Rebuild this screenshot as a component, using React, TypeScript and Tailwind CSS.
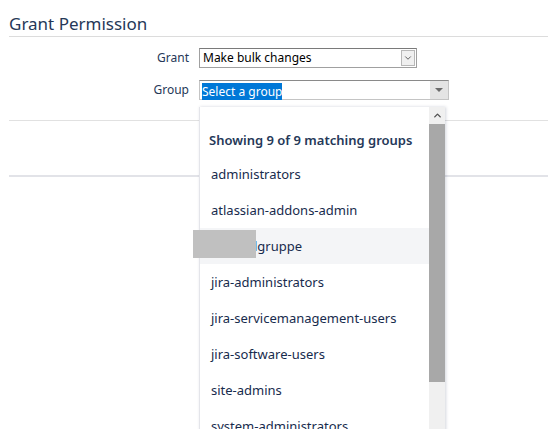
import { ChevronDown, ChevronUp } from "lucide-react";

const groups = [
  "administrators",
  "atlassian-addons-admin",
  "lgruppe",
  "jira-administrators",
  "jira-servicemanagement-users",
  "jira-software-users",
  "site-admins",
  "system-administrators",
];

function GroupDropdown() {
  return (
    <div className="absolute left-[199px] top-[107px] flex h-[340px] w-[246px] border-l border-[#e4e5ea] bg-white shadow-[1px_0_3px_rgba(9,30,66,0.18)]">
      <div className="flex-1">
        <div className="pl-[9px] pt-[24px] pb-[7px] text-[13px] font-semibold leading-[18px] text-[#253858]">
          Showing 9 of 9 matching groups
        </div>
        <ul>
          {groups.map((g, i) => (
            <li
              key={g}
              className={
                "relative h-[36px] pl-[11px] text-[13px] leading-[36px] text-[#172b4d] " +
                (i === 2 ? "bg-[#f4f5f7]" : "")
              }
            >
              {i === 2 && (
                <span className="absolute left-[-7px] top-[2px] h-[28px] w-[63px] bg-[#c0c0c0]" />
              )}
              <span className={i === 2 ? "pl-[43px]" : ""}>{g}</span>
            </li>
          ))}
        </ul>
      </div>
      <div className="flex w-[16px] flex-col bg-[#f0f0f0]">
        <div className="flex h-[17px] items-center justify-center">
          <ChevronUp className="h-[11px] w-[11px] text-[#505050]" strokeWidth={3} />
        </div>
        <div className="h-[258px] bg-[#a8a8a8]" />
      </div>
    </div>
  );
}

export default function App() {
  return (
    <div
      className="relative h-[429px] w-[548px] overflow-hidden bg-white"
      style={{ fontFamily: '"Noto Sans", "Open Sans", sans-serif' }}
    >
      <div className="ml-[9px] border-b border-[#dcdcdc] pt-[13px] pb-[1px]">
        <h2 className="text-[17px] leading-[22px] text-[#253858]">Grant Permission</h2>
      </div>

      <div className="mt-[11px] flex flex-col gap-[12px]">
        <div className="flex items-center">
          <label className="w-[189px] text-right text-[12px] text-[#253858]">Grant</label>
          <div className="ml-[10px] flex h-[20px] w-[218px] items-center border border-[#a0a0a0] border-t-[#7a7a7a] bg-white pl-[3px] pr-[1px]">
            <span className="flex-1 text-[12px] text-black">Make bulk changes</span>
            <span className="flex h-[16px] w-[14px] items-center justify-center border border-[#b8b8b8] bg-[#f0f0f0]">
              <ChevronDown className="h-[10px] w-[10px] text-[#444]" strokeWidth={2} />
            </span>
          </div>
        </div>
        <div className="flex items-center">
          <label className="w-[189px] text-right text-[12px] text-[#253858]">Group</label>
          <div className="ml-[10px] flex h-[20px] w-[250px] items-center border border-[#c4c4c4] border-t-[#8a8a8a] bg-white pl-[2px]">
            <span className="flex-1">
              <span className="bg-[#0078d7] text-[12px] text-white">Select a group</span>
            </span>
            <span className="flex h-[18px] w-[18px] items-center justify-center bg-[#e4e4e4]">
              <span className="h-0 w-0 border-x-[4px] border-t-[4px] border-x-transparent border-t-[#6b6b6b]" />
            </span>
          </div>
        </div>
      </div>

      <div className="ml-[9px] mt-[20px] h-px bg-[#e1e1e1]" />
      <div className="ml-[9px] mt-[54px] h-[2px] bg-[#e2e3e8]" />

      <GroupDropdown />
    </div>
  );
}
